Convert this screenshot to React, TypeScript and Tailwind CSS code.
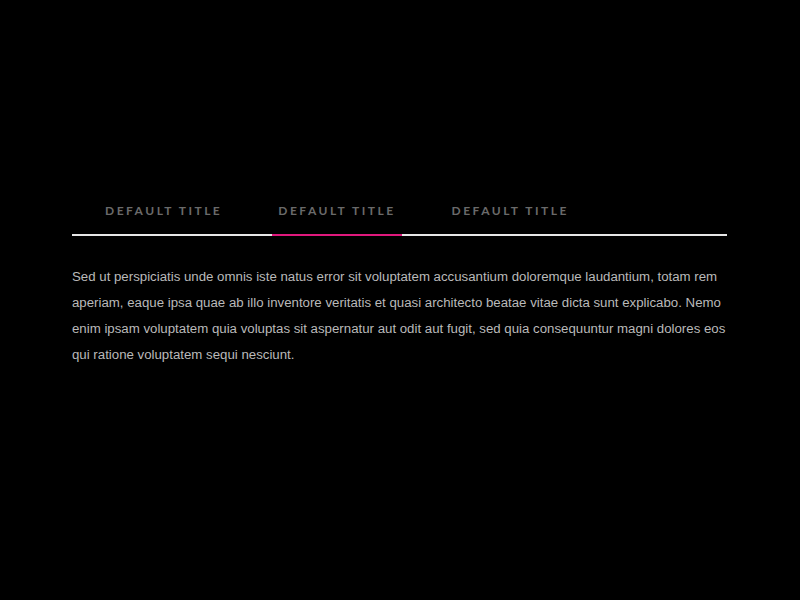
import { useState } from 'react'

const tabs = ['DEFAULT TITLE', 'DEFAULT TITLE', 'DEFAULT TITLE']

export default function App() {
  const [active, setActive] = useState(1)

  return (
    <div className="min-h-[600px] w-full bg-black">
      <div className="mx-[72px] w-[655px] pt-[188px]">
        {/* tab bar */}
        <div className="flex border-b-2 border-[#e6e6e6] pl-[27px] gap-[44px]">
          {tabs.map((t, i) => (
            <button
              key={i}
              onClick={() => setActive(i)}
              className={`-mb-[2px] border-b-2 px-[6px] pt-[15px] pb-[15px] text-[12px] leading-[16px] font-bold tracking-[2.5px] text-[#6a6a6a] ${
                active === i ? 'border-[#e0197d]' : 'border-transparent'
              }`}
              style={{ fontFamily: 'Lato, "Open Sans", sans-serif' }}
            >
              {t}
            </button>
          ))}
        </div>

        <p
          className="mt-[28px] w-[660px] text-[13.25px] leading-[26px] text-[#bababa]"
          style={{ fontFamily: '"Liberation Sans", Arial, sans-serif' }}
        >
          Sed ut perspiciatis unde omnis iste natus error sit voluptatem accusantium doloremque laudantium, totam rem
          aperiam, eaque ipsa quae ab illo inventore veritatis et quasi architecto beatae vitae dicta sunt explicabo. Nemo
          enim ipsam voluptatem quia voluptas sit aspernatur aut odit aut fugit, sed quia consequuntur magni dolores eos
          qui ratione voluptatem sequi nesciunt.
        </p>
      </div>
    </div>
  )
}
